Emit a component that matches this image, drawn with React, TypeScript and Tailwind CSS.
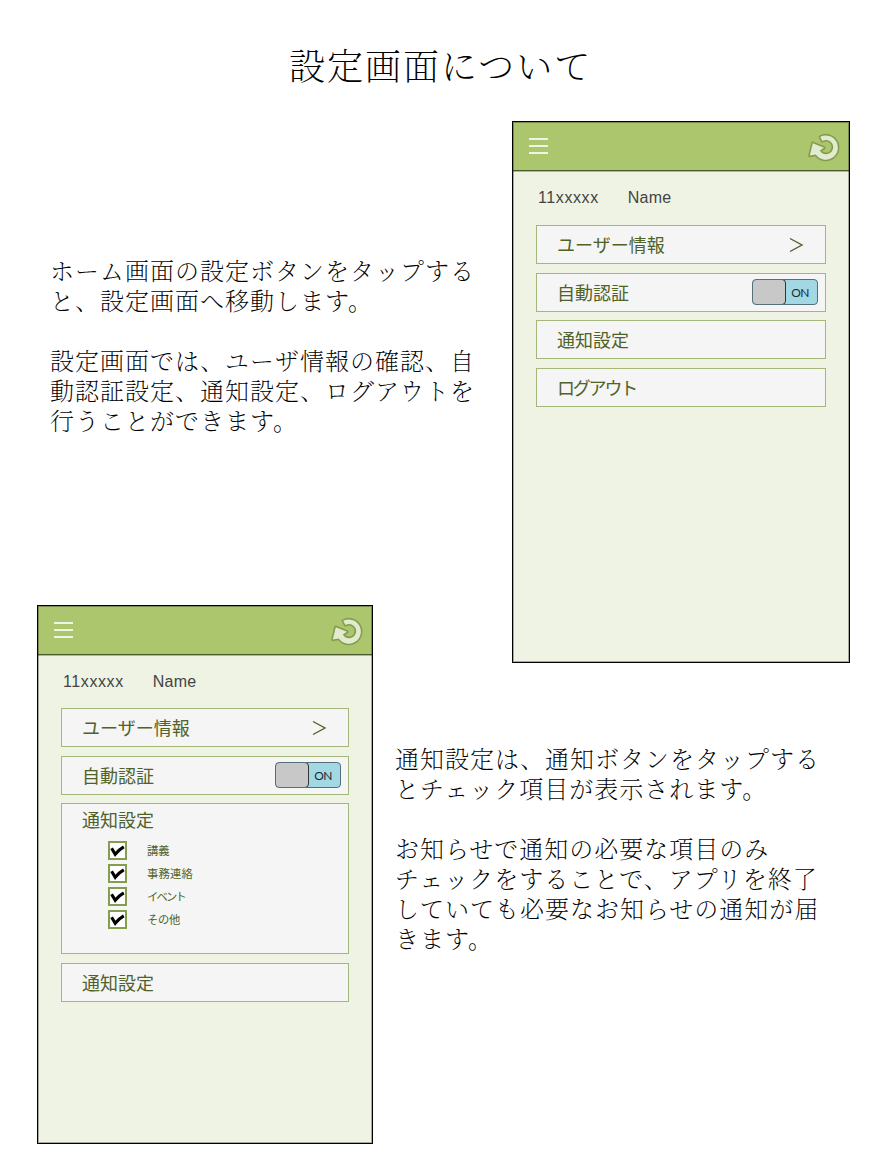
import type { ReactNode } from "react";

const sans = "font-['Noto_Sans_CJK_JP',sans-serif]";

function RefreshIcon() {
  return (
    <svg className="h-9 w-9" viewBox="0 0 36 36" fill="none">
      <path
        d="M14.2 6.8A12.1 12.1 0 1 1 9.8 24.4L3.8 25.6L6.8 13.2L18 17.8L13.8 20.4A7.1 7.1 0 1 0 16.4 11Z"
        fill="#e3ebcf"
        stroke="#849c4f"
        strokeWidth="3.2"
        strokeLinejoin="round"
        paintOrder="stroke"
      />
    </svg>
  );
}

function Phone({ className, children }: { className: string; children: ReactNode }) {
  return (
    <div
      className={`shrink-0 border border-black bg-[#eef3e3] outline-1 -outline-offset-2 outline-black/30 ${sans} ${className}`}
    >
      <div className="flex h-[49px] justify-between border-b border-[#4c5b2d] bg-[#acc66d] pl-4 pr-[7px] shadow-[0_1px_0_rgba(60,70,40,0.35)]">
        <div className="mt-4 flex h-4 w-[19px] flex-col justify-between">
          <div className="h-0.5 bg-[#f0f4e6]" />
          <div className="h-0.5 bg-[#f0f4e6]" />
          <div className="h-0.5 bg-[#f0f4e6]" />
        </div>
        <div className="mt-2">
          <RefreshIcon />
        </div>
      </div>
      <div className="mt-[15px] flex h-6 items-center gap-[29px] pl-[25px] font-['Liberation_Sans',sans-serif] text-base text-[#444]">
        <span className="tracking-[0.6px]">11xxxxx</span>
        <span className="tracking-[0.2px]">Name</span>
      </div>
      {children}
    </div>
  );
}

function Row({ label, className = "", children }: { label: string; className?: string; children?: ReactNode }) {
  return (
    <div
      className={`ml-[23px] flex h-[39px] items-center justify-between border border-[#a4b77a] bg-[#f5f5f5] pb-px pl-5 text-[18px] leading-6 text-[#4f6228] ${className}`}
    >
      <span>{label}</span>
      {children}
    </div>
  );
}

function Chevron() {
  return (
    <svg className="mr-[21px] mt-0.5 h-4 w-4" viewBox="0 0 16 16" fill="none">
      <path d="M2 1.5L14 8L2 14.5" stroke="#4f6228" strokeWidth="1.4" />
    </svg>
  );
}

function Toggle() {
  return (
    <div className="mr-[7px] flex h-[26px] w-[66px] overflow-hidden rounded-[4px] border border-[#557079] bg-[#a2d7e4]">
      <div className="-my-px -ml-px h-[26px] w-[34px] rounded-[4px] border border-[#333] bg-[#c8c8c8]" />
      <span className="flex flex-1 items-center justify-center pr-[3px] pt-px font-[Lato,sans-serif] text-[12px] tracking-[-0.6px] text-[#1c2b30]">
        ON
      </span>
    </div>
  );
}

function Check({ label, className = "" }: { label: string; className?: string }) {
  return (
    <div className="flex h-[23px] items-center gap-[20px]">
      <span className="flex h-[19px] w-[19px] items-center justify-center border-2 border-[#859e4e] bg-white">
        <svg className="h-[15px] w-[15px]" viewBox="0 0 15 15" fill="none">
          <path d="M1.6 5.2L5.2 11.2C7.3 8.6 9.8 6 13.8 3.8" stroke="#000" strokeWidth="3.1" />
        </svg>
      </span>
      <span className={`text-[11.3px] text-[#4f6228] ${className}`}>{label}</span>
    </div>
  );
}

const serif = "font-['Noto_Serif_CJK_JP','Noto_Sans_CJK_JP',serif] font-extralight text-black";
const prose = `whitespace-nowrap text-[24px] leading-[30px] tracking-[1px] ${serif}`;

export default function App() {
  return (
    <div className="h-[1176px] w-[882px] overflow-hidden bg-white">
      <h1 className={`h-[121px] pl-[289px] pt-[40px] text-[36px] leading-[50px] tracking-[2px] ${serif}`}>
        設定画面について
      </h1>
      <section className="flex h-[542px] pl-[50px]">
        <div className={`w-[462px] pt-[134px] ${prose}`}>
          <p>ホーム画面の設定ボタンをタップする<br />と、設定画面へ移動します。</p>
          <p className="mt-[30px]">設定画面では、ユーザ情報の確認、自<br />動認証設定、通知設定、ログアウトを<br />行うことができます。</p>
        </div>
        <Phone className="h-[542px] w-[338px]">
          <div className="mt-[15px] flex w-[313px] flex-col">
            <Row label="ユーザー情報"><Chevron /></Row>
            <Row label="自動認証" className="mt-[9px]"><Toggle /></Row>
            <Row label="通知設定" className="mt-2" />
            <Row label="ログアウト" className="mt-[9px] tracking-[-2.2px]" />
          </div>
        </Phone>
      </section>
      <section className="mt-[-58px] flex h-[539px] pl-[37px]">
        <Phone className="h-[539px] w-[336px]">
          <div className="mt-[14px] flex w-[311px] flex-col">
            <Row label="ユーザー情報"><Chevron /></Row>
            <Row label="自動認証" className="mt-[9px]"><Toggle /></Row>
            <div className="ml-[23px] mt-2 h-[151px] border border-[#a4b77a] bg-[#f5f5f5] text-[#4f6228]">
              <div className="h-[35px] pl-5 pt-[3px] text-[18px] leading-6">通知設定</div>
              <div className="flex flex-col pl-[46px]">
                <Check label="講義" />
                <Check label="事務連絡" className="tracking-[0.2px]" />
                <Check label="イベント" className="tracking-[-1.8px]" />
                <Check label="その他" className="tracking-[-0.3px]" />
              </div>
            </div>
            <Row label="通知設定" className="mt-[9px]" />
          </div>
        </Phone>
        <div className={`pl-[22px] pt-[138px] ${prose}`}>
          <p>通知設定は、通知ボタンをタップする<br />とチェック項目が表示されます。</p>
          <p className="mt-[30px]">お知らせで通知の必要な項目のみ<br />チェックをすることで、アプリを終了<br />していても必要なお知らせの通知が届<br />きます。</p>
        </div>
      </section>
    </div>
  );
}
